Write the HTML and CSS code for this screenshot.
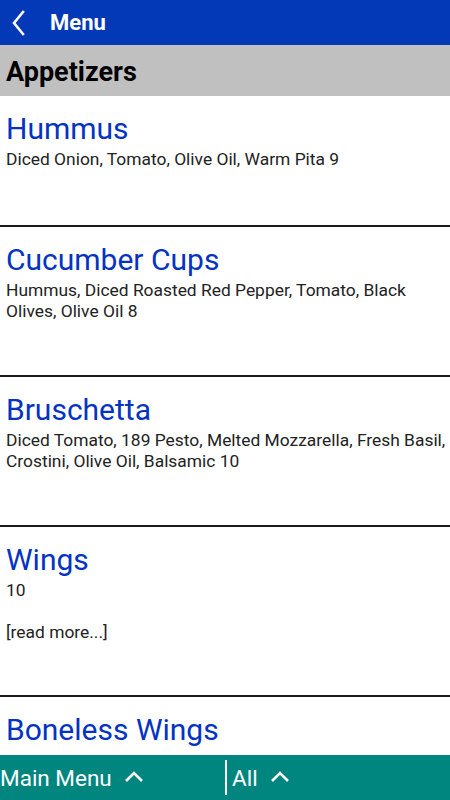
FILE: index.html
```html
<!DOCTYPE html>
<html>
<head>
<meta charset="utf-8">
<link rel="stylesheet" href="styles.css">
</head>
<body>
<div class="app">
  <header class="topbar">
    <span class="back"><svg width="14" height="26" viewBox="0 0 14 26"><path d="M12 2 L3 13 L12 24" fill="none" stroke="#fff" stroke-width="2.6" stroke-linecap="square"/></svg></span>
    <span class="title">Menu</span>
  </header>
  <div class="section">Appetizers</div>
  <main class="list">
    <div class="item">
      <div class="name">Hummus</div>
      <div class="desc">Diced Onion, Tomato, Olive Oil, Warm Pita 9</div>
    </div>
    <div class="item">
      <div class="name">Cucumber Cups</div>
      <div class="desc">Hummus, Diced Roasted Red Pepper, Tomato, Black Olives, Olive Oil 8</div>
    </div>
    <div class="item">
      <div class="name">Bruschetta</div>
      <div class="desc">Diced Tomato, 189 Pesto, Melted Mozzarella, Fresh Basil, Crostini, Olive Oil, Balsamic 10</div>
    </div>
    <div class="item">
      <div class="name">Wings</div>
      <div class="desc">10<br><br>[read more...]</div>
    </div>
    <div class="item last">
      <div class="name">Boneless Wings</div>
    </div>
  </main>
  <footer class="bottombar">
    <div class="tab tab-main">Main Menu <svg class="up" width="20" height="12" viewBox="0 0 20 12"><path d="M2 10 L10 2 L18 10" fill="none" stroke="#fff" stroke-width="2.6"/></svg></div>
    <div class="sep"></div>
    <div class="tab tab-all">All <svg class="up" width="20" height="12" viewBox="0 0 20 12"><path d="M2 10 L10 2 L18 10" fill="none" stroke="#fff" stroke-width="2.6"/></svg></div>
  </footer>
</div>
</body>
</html>
```
FILE: styles.css
```css
* { box-sizing: border-box; }
html, body { margin: 0; padding: 0; }
body {
  font-family: Roboto, "Liberation Sans", sans-serif;
  background: #fff;
  width: 450px;
  height: 800px;
  overflow: hidden;
}
.app {
  display: flex;
  flex-direction: column;
  height: 800px;
}
.topbar {
  height: 45px;
  flex: none;
  background: #0339b6;
  display: flex;
  align-items: center;
  color: #fff;
}
.back {
  width: 50px;
  padding-left: 11px;
  display: flex;
  align-items: center;
}
.topbar .title {
  font-weight: bold;
  font-size: 22px;
}
.section {
  height: 51px;
  flex: none;
  background: #c0c0c0;
  font-weight: bold;
  font-size: 27px;
  line-height: 54px;
  padding-left: 6px;
  color: #000;
}
.list {
  flex: 1;
  overflow: hidden;
}
.item {
  padding: 15px 0 0 6px;
  border-bottom: 2px solid #1a1a1a;
}
.item:nth-child(1) { height: 131px; }
.item:nth-child(2) { height: 150px; }
.item:nth-child(3) { height: 150px; }
.item:nth-child(4) { height: 170px; }
.item.last { border-bottom: none; }
.name {
  font-size: 30px;
  line-height: 36px;
  color: #0433c4;
  margin-bottom: 2px;
}
.desc {
  font-size: 17.4px;
  line-height: 21px;
  color: #222;
}
.bottombar {
  height: 45px;
  flex: none;
  background: #00857f;
  color: #fff;
  display: flex;
  align-items: center;
  font-size: 22.5px;
}
.tab {
  display: flex;
  align-items: center;
}
.tab-main { width: 225px; }
.tab-main .up { margin-left: 12px; }
.tab-all { padding-left: 5px; }
.tab-all .up { margin-left: 12px; }
.up { margin-top: -2px; }
.sep {
  width: 2px;
  height: 35px;
  background: #fff;
}
```
